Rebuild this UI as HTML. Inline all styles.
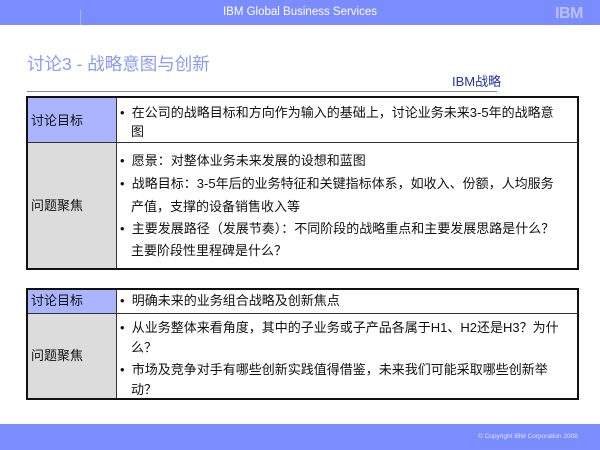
<!DOCTYPE html>
<html><head><meta charset="utf-8"><style>
*{margin:0;padding:0;box-sizing:border-box}
body{width:600px;height:450px;background:#fff;position:relative;overflow:hidden;font-family:"Liberation Sans","Noto Sans CJK SC",sans-serif}
.a{position:absolute;white-space:nowrap}
.t{font-size:13px;color:#111;line-height:15px}
.b{position:absolute;border:2px solid #111}
</style></head><body>
<div class="a" style="left:0;top:0;width:600px;height:25px;background:#7b8cff"></div>
<div class="a" style="left:80px;top:10px;width:1px;height:15px;background:#a8b4ff"></div>
<div class="a" style="left:0;top:6px;width:600px;text-align:center;color:#fff;font-size:11.5px">IBM Global Business Services</div>
<div class="a" style="left:555px;top:5px;color:#b8c2ff;font-size:16px;font-weight:bold;letter-spacing:-0.5px">IBM</div>
<div class="a" style="left:27px;top:51px;color:#8a9af5;font-size:17.5px">讨论3 - 战略意图与创新</div>
<div class="a" style="left:452px;top:71px;color:#2233aa;font-size:13px">IBM战略</div>
<div class="a" style="left:27px;top:91px;width:470px;height:1px;background:#888"></div>

<div class="b" style="left:26px;top:96px;width:553px;height:174px;background:#fff"></div>
<div class="a" style="left:28px;top:98px;width:88px;height:44px;background:#aab4ff"></div>
<div class="a" style="left:28px;top:143px;width:88px;height:125px;background:#dcdcdc"></div>
<div class="a" style="left:116px;top:98px;width:1px;height:170px;background:#333"></div>
<div class="a" style="left:28px;top:142px;width:550px;height:1px;background:#333"></div>
<div class="a t" style="left:31px;top:113px">讨论目标</div>
<div class="a t" style="left:31px;top:198px">问题聚焦</div>
<div class="a t" style="left:120px;top:105px">•&nbsp; 在公司的战略目标和方向作为输入的基础上，讨论业务未来3-5年的战略意</div>
<div class="a t" style="left:131px;top:124px">图</div>
<div class="a t" style="left:120px;top:153px">•&nbsp; 愿景：对整体业务未来发展的设想和蓝图</div>
<div class="a t" style="left:120px;top:176px">•&nbsp; 战略目标：3-5年后的业务特征和关键指标体系，如收入、份额，人均服务</div>
<div class="a t" style="left:131px;top:199px">产值，支撑的设备销售收入等</div>
<div class="a t" style="left:120px;top:221px">•&nbsp; 主要发展路径（发展节奏）：不同阶段的战略重点和主要发展思路是什么？</div>
<div class="a t" style="left:131px;top:243px">主要阶段性里程碑是什么？</div>

<div class="b" style="left:26px;top:288px;width:553px;height:112px;background:#fff"></div>
<div class="a" style="left:28px;top:290px;width:88px;height:23px;background:#aab4ff"></div>
<div class="a" style="left:28px;top:314px;width:88px;height:84px;background:#dcdcdc"></div>
<div class="a" style="left:116px;top:290px;width:1px;height:108px;background:#333"></div>
<div class="a" style="left:28px;top:313px;width:550px;height:1px;background:#333"></div>
<div class="a t" style="left:31px;top:293px">讨论目标</div>
<div class="a t" style="left:31px;top:348px">问题聚焦</div>
<div class="a t" style="left:120px;top:293px">•&nbsp; 明确未来的业务组合战略及创新焦点</div>
<div class="a t" style="left:120px;top:320px">•&nbsp; 从业务整体来看角度，其中的子业务或子产品各属于H1、H2还是H3？为什</div>
<div class="a t" style="left:131px;top:340px">么？</div>
<div class="a t" style="left:120px;top:362px">•&nbsp; 市场及竞争对手有哪些创新实践值得借鉴，未来我们可能采取哪些创新举</div>
<div class="a t" style="left:131px;top:382px">动？</div>

<div class="a" style="left:0;top:424px;width:600px;height:26px;background:#7b8cff"></div>
<div class="a" style="left:478px;top:433px;color:#dde2ff;font-size:6.5px">© Copyright IBM Corporation 2008</div>
</body></html>
